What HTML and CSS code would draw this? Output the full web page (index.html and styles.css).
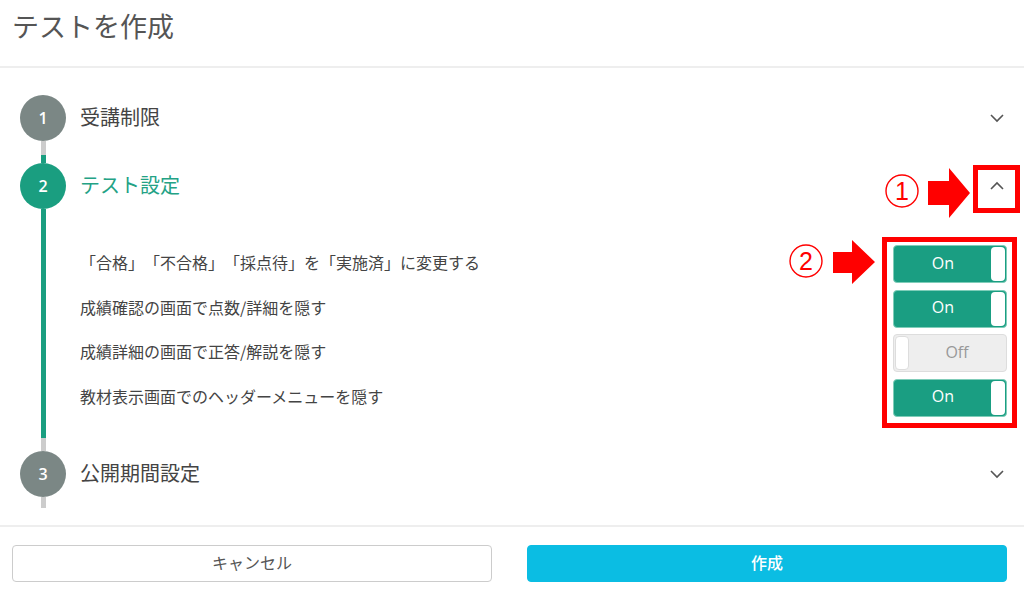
FILE: index.html
```html
<!DOCTYPE html>
<html lang="ja">
<head>
<meta charset="utf-8">
<title>テストを作成</title>
<link rel="stylesheet" href="styles.css">
</head>
<body>
<div class="page">
  <header class="header">
    <h1 class="title">テストを作成</h1>
  </header>

  <div class="stepper">
    <div class="step">
      <div class="circle circle-gray">1</div>
      <div class="step-head">
        <span class="step-label">受講制限</span>
        <svg class="chev" width="20" height="12" viewBox="0 0 20 12"><polyline points="4,3 10,9 16,3" fill="none" stroke="#555" stroke-width="1.6"/></svg>
      </div>
      <div class="rail-line line-1"></div>
      <div></div>
    </div>

    <div class="step">
      <div class="circle circle-green">2</div>
      <div class="step-head">
        <span class="step-label label-active">テスト設定</span>
        <svg class="chev" width="20" height="12" viewBox="0 0 20 12"><polyline points="4,9 10,3 16,9" fill="none" stroke="#555" stroke-width="1.6"/></svg>
      </div>
      <div class="rail-line line-2"></div>
      <div class="step-body">
        <div class="opt-row">
          <span class="opt-label">「合格」「不合格」「採点待」を「実施済」に変更する</span>
          <div class="toggle on"><span class="toggle-text">On</span><span class="knob"></span></div>
        </div>
        <div class="opt-row">
          <span class="opt-label">成績確認の画面で点数/詳細を隠す</span>
          <div class="toggle on"><span class="toggle-text">On</span><span class="knob"></span></div>
        </div>
        <div class="opt-row">
          <span class="opt-label">成績詳細の画面で正答/解説を隠す</span>
          <div class="toggle off"><span class="knob"></span><span class="toggle-text">Off</span></div>
        </div>
        <div class="opt-row">
          <span class="opt-label">教材表示画面でのヘッダーメニューを隠す</span>
          <div class="toggle on"><span class="toggle-text">On</span><span class="knob"></span></div>
        </div>
      </div>
    </div>

    <div class="step">
      <div class="circle circle-gray">3</div>
      <div class="step-head">
        <span class="step-label">公開期間設定</span>
        <svg class="chev" width="20" height="12" viewBox="0 0 20 12"><polyline points="4,3 10,9 16,3" fill="none" stroke="#555" stroke-width="1.6"/></svg>
      </div>
      <div class="rail-line line-3"></div>
      <div></div>
    </div>
  </div>

  <footer class="footer">
    <button class="btn btn-cancel">キャンセル</button>
    <button class="btn btn-primary">作成</button>
  </footer>

  <div class="anno anno-box anno-box-1"></div>
  <div class="anno anno-box anno-box-2"></div>
  <svg class="anno anno-num anno-num-1" width="36" height="36" viewBox="0 0 36 36"><circle cx="18" cy="18" r="16" fill="none" stroke="#ff0000" stroke-width="1.4"/><text x="18" y="27" text-anchor="middle" font-family="Liberation Sans, sans-serif" font-size="25" fill="#ff0000">1</text></svg>
  <svg class="anno anno-num anno-num-2" width="36" height="36" viewBox="0 0 36 36"><circle cx="18" cy="18" r="16" fill="none" stroke="#ff0000" stroke-width="1.4"/><text x="18" y="27" text-anchor="middle" font-family="Liberation Sans, sans-serif" font-size="25" fill="#ff0000">2</text></svg>
  <svg class="anno anno-arrow anno-arrow-1" width="42" height="50" viewBox="0 0 42 50"><polygon points="0,13 21,13 21,0 42,25 21,50 21,37 0,37" fill="#ff0000"/></svg>
  <svg class="anno anno-arrow anno-arrow-2" width="42" height="44" viewBox="0 0 42 44"><polygon points="0,12 19,12 19,0 42,22 19,44 19,33 0,33" fill="#ff0000"/></svg>
</div>
</body>
</html>
```

FILE: styles.css
```css
* { box-sizing: border-box; }
html, body { margin: 0; padding: 0; background: #fff; }
body {
  font-family: "Noto Sans CJK JP", "Noto Sans", sans-serif;
  color: #444;
  width: 1024px;
  height: 594px;
  overflow: hidden;
  text-spacing-trim: space-all;
}
.page { position: relative; width: 1024px; height: 594px; }

.header {
  padding: 10px 12px 24px;
  border-bottom: 2px solid #eeeeee;
}
.title {
  margin: 0;
  font-size: 27px;
  line-height: 32px;
  font-weight: 400;
  color: #555;
}

.stepper {
  padding: 27px 17px 17px 20px;
}
.step {
  display: grid;
  grid-template-columns: 46px 1fr;
  column-gap: 14px;
}
.circle {
  width: 46px;
  height: 46px;
  border-radius: 50%;
  display: flex;
  align-items: center;
  justify-content: center;
  color: #fff;
  font-family: "Open Sans", "Noto Sans", sans-serif;
  font-size: 16px;
  font-weight: 600;
}
.circle-gray { background: #7b8785; }
.circle-green { background: #1a9e80; }

.step-head {
  height: 46px;
  display: flex;
  align-items: center;
  justify-content: space-between;
}
.step-label {
  font-size: 20px;
  color: #444;
  line-height: 1;
  padding-bottom: 2px;
}
.label-active { color: #23a285; }
.chev { display: block; }

.rail-line {
  width: 5px;
  justify-self: center;
}
.line-1 {
  height: 22px;
  background: linear-gradient(to bottom, #cccccc 0, #cccccc 14px, #1a9e80 14px);
}
.line-2 {
  background: linear-gradient(to bottom, #1a9e80 0, #1a9e80 calc(100% - 13px), #cccccc calc(100% - 13px));
}
.line-3 {
  height: 11px;
  background: #cccccc;
}

.step-body {
  padding: 36px 0 34px;
  display: flex;
  flex-direction: column;
  gap: 6.67px;
}
.opt-row {
  display: flex;
  align-items: center;
  justify-content: space-between;
  height: 38px;
}
.opt-label {
  font-size: 16px;
  color: #444;
  line-height: 22px;
  padding-bottom: 4px;
}

.toggle {
  width: 114px;
  height: 38px;
  border-radius: 4px;
  display: flex;
  align-items: stretch;
  padding: 1px;
  font-family: "Open Sans", "Noto Sans", sans-serif;
  font-size: 16px;
}
.toggle.on {
  background: #1a9e82;
  border: 1px solid #7fcdb9;
  color: #fff;
}
.toggle.off {
  background: #eeeeee;
  border: 1px solid #dddddd;
  color: #999;
}
.toggle-text {
  flex: 1;
  display: flex;
  align-items: center;
  justify-content: center;
  padding-bottom: 3px;
}
.knob {
  width: 14px;
  background: #fff;
  border-radius: 4px;
}
.toggle.off .knob { border: 1px solid #dddddd; }

.footer {
  border-top: 2px solid #eeeeee;
  padding: 18px 17px 12px 12px;
  display: flex;
  gap: 35px;
}
.btn {
  flex: 1;
  height: 37px;
  border-radius: 4px;
  font-family: "Noto Sans CJK JP", "Noto Sans", sans-serif;
  font-size: 16px;
  cursor: pointer;
  padding: 0 0 2px;
}
.btn-cancel {
  background: #fff;
  border: 1px solid #cccccc;
  color: #555;
}
.btn-primary {
  background: #0bbde3;
  border: 1px solid #0bbde3;
  color: #fff;
  font-weight: 500;
}

.anno { position: absolute; display: block; }
.anno-box { border: 5px solid #ff0000; }
.anno-box-1 { left: 973px; top: 165px; width: 47px; height: 48px; }
.anno-box-2 { left: 882px; top: 237px; width: 135px; height: 191px; }
.anno-num-1 { left: 884px; top: 173px; }
.anno-num-2 { left: 788px; top: 243px; }
.anno-arrow-1 { left: 928px; top: 168px; }
.anno-arrow-2 { left: 833px; top: 240px; }
```
